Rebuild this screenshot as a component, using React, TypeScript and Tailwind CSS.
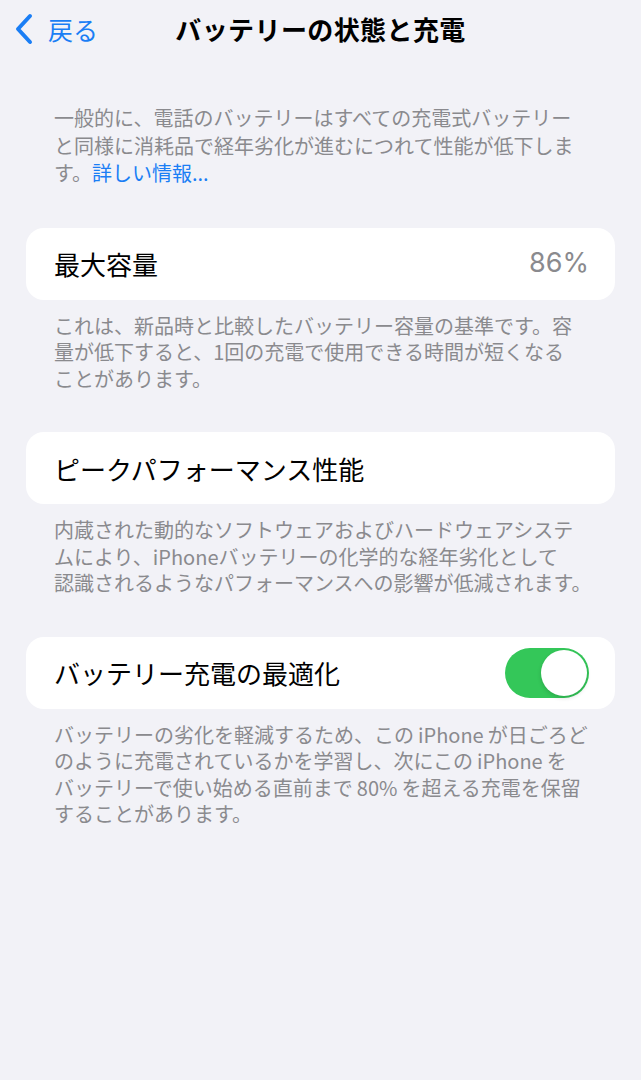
import React from "react";

const FONT = { fontFamily: '"Noto Sans CJK JP", "Noto Sans", sans-serif' };

function BackChevron() {
  return (
    <svg width="20" height="32" viewBox="0 0 20 32" fill="none" aria-hidden="true">
      <path d="M16 3 L4 16 L16 29" stroke="#1a7ef5" strokeWidth="4" strokeLinecap="round" strokeLinejoin="round" />
    </svg>
  );
}

function Toggle({ on }: { on: boolean }) {
  return (
    <div className={`relative h-[50px] w-[84px] rounded-full ${on ? "bg-[#34c759]" : "bg-[#e9e9ea]"}`}>
      <div className="absolute right-[2px] top-[2px] h-[46px] w-[46px] rounded-full bg-white shadow-[0_2px_4px_rgba(0,0,0,0.15)]" />
    </div>
  );
}

function Card({ children }: { children: React.ReactNode }) {
  return (
    <div className="mx-[26px] flex h-[72px] items-center justify-between rounded-[18px] bg-white pl-[28px] pr-[26px]">
      {children}
    </div>
  );
}

function Footer({ lines }: { lines: string[] }) {
  return (
    <div className="px-[54px] pt-[13px] text-[20px] leading-[26.5px] text-[#8a8a8e]">
      {lines.map((l) => (
        <div key={l} className="whitespace-nowrap">
          {l}
        </div>
      ))}
    </div>
  );
}

export default function App() {
  return (
    <div className="min-h-[1080px] w-full bg-[#f2f2f7]" style={FONT}>
      {/* navigation bar */}
      <header className="grid h-[58px] grid-cols-[1fr_auto_1fr] items-center">
        <div className="flex items-center gap-[14px] pl-[14px]">
          <BackChevron />
          <span className="text-[25px] leading-none text-[#1a7ef5]">戻る</span>
        </div>
        <h1 className="text-[26px] font-semibold leading-none tracking-[0.4px] text-black">バッテリーの状態と充電</h1>
        <div />
      </header>

      <div className="px-[54px] pt-[46px] text-[20px] leading-[27.5px] text-[#8a8a8e]">
        <div className="whitespace-nowrap">一般的に、電話のバッテリーはすべての充電式バッテリー</div>
        <div className="whitespace-nowrap">と同様に消耗品で経年劣化が進むにつれて性能が低下しま</div>
        <div className="whitespace-nowrap">
          す。<span className="text-[#1a7ef5]">詳しい情報...</span>
        </div>
      </div>

      <div className="mt-[41px]">
        <Card>
          <span className="text-[26px] text-black">最大容量</span>
          <span className="text-[27px] text-[#8a8a8e]" style={{ fontFamily: 'Inter, "Noto Sans", sans-serif' }}>
            86%
          </span>
        </Card>
        <Footer
          lines={[
            "これは、新品時と比較したバッテリー容量の基準です。容",
            "量が低下すると、1回の充電で使用できる時間が短くなる",
            "ことがあります。",
          ]}
        />
      </div>

      <div className="mt-[40px]">
        <Card>
          <span className="text-[26px] text-black">ピークパフォーマンス性能</span>
        </Card>
        <Footer
          lines={[
            "内蔵された動的なソフトウェアおよびハードウェアシステ",
            "ムにより、iPhoneバッテリーの化学的な経年劣化として",
            "認識されるようなパフォーマンスへの影響が低減されます。",
          ]}
        />
      </div>

      <div className="mt-[40px]">
        <Card>
          <span className="text-[26px] text-black">バッテリー充電の最適化</span>
          <Toggle on />
        </Card>
        <Footer
          lines={[
            "バッテリーの劣化を軽減するため、この\u2009iPhone\u2009が日ごろど",
            "のように充電されているかを学習し、次にこの\u2009iPhone\u2009を",
            "バッテリーで使い始める直前まで\u200980%\u2009を超える充電を保留",
            "することがあります。",
          ]}
        />
      </div>
    </div>
  );
}
